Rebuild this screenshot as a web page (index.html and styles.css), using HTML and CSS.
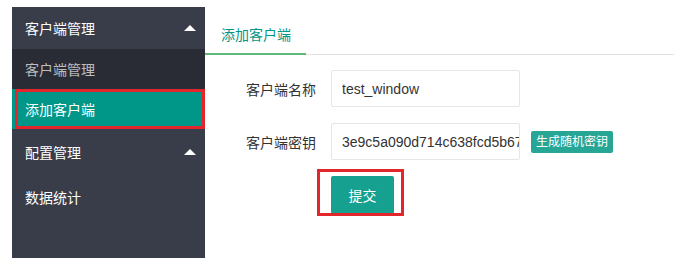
FILE: index.html
```html
<!DOCTYPE html>
<html>
<head>
<meta charset="utf-8">
<title>添加客户端</title>
<link rel="stylesheet" href="styles.css">
</head>
<body>
<div class="page">
	<div class="side">
		<div class="nav-head">客户端管理<span class="arrow"></span></div>
		<div class="nav-sub">
			<div class="nav-item">客户端管理</div>
			<div class="nav-item active mark">添加客户端</div>
		</div>
		<div class="nav-head tall">配置管理<span class="arrow"></span></div>
		<div class="nav-head tall">数据统计</div>
	</div>
	<div class="main">
		<div class="tabs">
			<div class="tab on">添加客户端</div>
		</div>
		<form name="f1" class="form">
			<div class="row">
				<label>客户端名称</label>
				<input type="text" name="name" value="test_window">
			</div>
			<div class="row">
				<label>客户端密钥</label>
				<input type="text" name="secret" value="3e9c5a090d714c638fcd5b67a1">
				<span class="badge">生成随机密钥</span>
			</div>
			<div class="row">
				<label></label>
				<span class="mark btn-wrap"><input type="button" class="btn" value="提交"></span>
			</div>
		</form>
	</div>
</div>
</body>
</html>
```

FILE: styles.css
```css
body{
	margin:0;
	background-color:#fff;
	font-family:"Liberation Sans","Noto Sans CJK SC",sans-serif;
	font-size:14px;
}
.page{
	display:flex;
	padding:7px 0 0 12px;
}
.side{
	width:193px;
	height:251px;
	background-color:#393d49;
	color:#fff;
}
.nav-head{
	display:flex;
	align-items:center;
	justify-content:space-between;
	height:42px;
	padding:0 9px 0 13px;
}
.nav-head.tall{
	height:45px;
}
.arrow{
	width:0;
	height:0;
	border-left:6px solid transparent;
	border-right:6px solid transparent;
	border-bottom:6px solid #fff;
}
.nav-sub{
	background-color:#2a2c35;
}
.nav-item{
	display:flex;
	align-items:center;
	height:40px;
	padding-left:13px;
	color:rgba(255,255,255,.7);
}
.nav-item.active{
	background-color:#009688;
	color:#fff;
}
.mark{
	position:relative;
}
.mark::after{
	content:"";
	position:absolute;
	border:3px solid #e3262b;
	pointer-events:none;
}
.nav-item.mark::after{
	left:3px;
	right:0;
	top:0;
	bottom:0;
}
.main{
	flex:1;
	padding-top:7px;
}
.tabs{
	display:flex;
	height:40px;
	border-bottom:1px solid #e2e2e2;
}
.tab{
	display:flex;
	align-items:center;
	padding:0 15px 0 16px;
	color:#009688;
}
.tab.on{
	border-bottom:2px solid #5fb878;
	margin-bottom:-1px;
}
.form{
	padding-top:15px;
}
.row{
	display:flex;
	align-items:center;
	margin-bottom:16px;
}
.row label{
	width:111px;
	margin-right:15px;
	text-align:right;
	color:#333;
}
input[type="text"]{
	width:189px;
	height:37px;
	box-sizing:border-box;
	border:1px solid #e6e6e6;
	border-radius:2px;
	padding:0 0 0 10px;
	font-family:"Liberation Sans",sans-serif;
	font-size:14px;
	color:#333;
	outline:none;
}
.badge{
	margin-left:11px;
	height:22px;
	line-height:22px;
	padding:0 5px;
	border-radius:2px;
	background-color:#27a595;
	color:#fff;
	font-size:12px;
}
.btn-wrap{
	display:flex;
}
.btn-wrap::after{
	left:-14px;
	right:-10px;
	top:-7px;
	bottom:-2px;
}
input[type="button"].btn{
	width:63px;
	height:38px;
	border:0;
	border-radius:2px;
	background-color:#16a08f;
	color:#fff;
	font-family:"Noto Sans CJK SC",sans-serif;
	font-size:14px;
	cursor:pointer;
}
```
